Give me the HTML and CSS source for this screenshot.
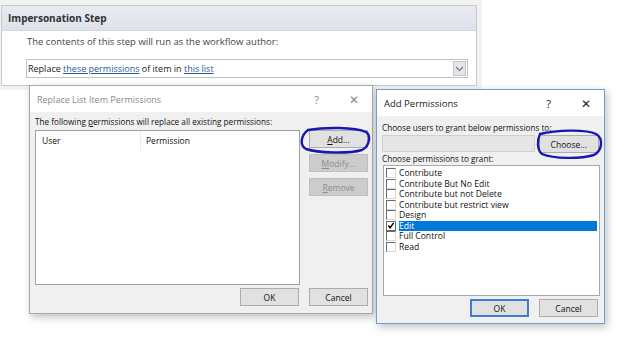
FILE: index.html
```html
<!DOCTYPE html>
<html lang="en">
<head>
    <meta charset="UTF-8">
    <title>Impersonation Step</title>
    <link rel="stylesheet" href="styles.css">
</head>
<body>
    <div class="desk">
        <section class="step">
            <div class="step-head">Impersonation Step</div>
            <div class="step-body">
                <p class="step-note">The contents of this step will run as the workflow author:</p>
                <div class="step-select">
                    <span>Replace <a href="#">these permissions</a> of item in <a href="#">this list</a></span>
                    <span class="chev">
                        <svg width="9" height="6" viewBox="0 0 9 6"><path d="M1 1 L4.5 4.5 L8 1" fill="none" stroke="#777" stroke-width="1.2"/></svg>
                    </span>
                </div>
            </div>
        </section>

        <div class="dialog dlg-replace">
            <div class="dlg-title inactive">
                <span>Replace List Item Permissions</span>
                <span class="title-tools"><span class="help">?</span><span class="close">&#x2715;</span></span>
            </div>
            <div class="dlg-body replace-body">
                <p class="label">The following <u>p</u>ermissions will replace all existing permissions:</p>
                <div class="replace-main">
                    <div class="perm-table">
                        <div class="perm-head">
                            <span class="col-user">User</span>
                            <span class="col-perm">Permission</span>
                        </div>
                    </div>
                    <div class="side-btns">
                        <button class="btn"><u>A</u>dd...</button>
                        <button class="btn" disabled><u>M</u>odify...</button>
                        <button class="btn" disabled><u>R</u>emove</button>
                    </div>
                </div>
                <div class="dlg-foot">
                    <button class="btn">OK</button>
                    <button class="btn">Cancel</button>
                </div>
            </div>
        </div>

        <div class="dialog dlg-add">
            <div class="dlg-title">
                <span>Add Permissions</span>
                <span class="title-tools"><span class="help">?</span><span class="close">&#x2715;</span></span>
            </div>
            <div class="dlg-body add-body">
                <p class="label">Choose users to grant below permissions to:</p>
                <div class="user-row">
                    <div class="user-field"></div>
                    <button class="btn">Choose...</button>
                </div>
                <p class="label">Choose permissions to grant:</p>
                <ul class="perm-list">
                    <li><span class="cb"></span>Contribute</li>
                    <li><span class="cb"></span>Contribute But No Edit</li>
                    <li><span class="cb"></span>Contribute but not Delete</li>
                    <li><span class="cb"></span>Contribute but restrict view</li>
                    <li><span class="cb"></span>Design</li>
                    <li class="selected"><span class="cb checked">
                        <svg width="9" height="9" viewBox="0 0 9 9"><path d="M1.5 4.5 L3.5 7 L7.5 1.5" fill="none" stroke="#000" stroke-width="1.6"/></svg>
                    </span><span class="sel-text">Edit</span></li>
                    <li><span class="cb"></span>Full Control</li>
                    <li><span class="cb"></span>Read</li>
                </ul>
                <div class="dlg-foot">
                    <button class="btn default">OK</button>
                    <button class="btn">Cancel</button>
                </div>
            </div>
        </div>

        <!-- hand-drawn marker circles -->
        <svg class="mark mark-add" width="72" height="28" viewBox="0 0 72 28">
            <path d="M8 4 C25 1 55 1 66 6 C71 9 70 20 62 24 C48 28 18 27 6 23 C0 20 0 10 8 4 Z" fill="none" stroke="#1818b0" stroke-width="2.4"/>
        </svg>
        <svg class="mark mark-choose" width="68" height="32" viewBox="0 0 68 32">
            <path d="M4 6 C20 2 50 1 60 6 C67 10 67 22 58 27 C44 31 18 31 6 26 C1 22 1 12 4 6 Z" fill="none" stroke="#1818b0" stroke-width="2.4"/>
        </svg>
    </div>
</body>
</html>
```

FILE: styles.css
```css
body {
    margin: 0;
    font-family: "Open Sans", "Noto Sans", sans-serif;
    background-color: #ffffff;
}

.desk {
    position: relative;
    width: 624px;
    height: 352px;
    overflow: hidden;
    background: linear-gradient(#f2f2f2, #f2f2f2) no-repeat 0 0 / 482px 90px, #ffffff;
}

/* workflow step panel */
.step {
    margin: 5px 0 0 1px;
    width: 476px;
    height: 81px;
    background-color: #ffffff;
    border: 1px solid #c9c9c9;
    box-sizing: border-box;
}

.step-head {
    height: 24px;
    line-height: 24px;
    padding-left: 6px;
    font-size: 10px;
    font-weight: bold;
    color: #333333;
    background: linear-gradient(#e8ebf0, #dde2ea);
    border-bottom: 1px solid #d3d7de;
}

.step-body {
    padding: 0 8px 0 24px;
}

.step-note {
    margin: 4px 0 0 1px;
    font-size: 9.5px;
    line-height: 14px;
    color: #444444;
}

.step-select {
    margin-top: 10px;
    height: 17px;
    display: flex;
    align-items: center;
    justify-content: space-between;
    padding-left: 1px;
    border: 1px solid #b9c3d0;
    font-size: 9px;
    color: #222222;
}

.step-select a {
    color: #2a5a9a;
}

.chev {
    width: 13px;
    height: 15px;
    margin-right: 1px;
    display: flex;
    align-items: center;
    justify-content: center;
    background-color: #e4e6ea;
    border: 1px solid #c2c6cc;
    box-sizing: border-box;
}

/* dialogs */
.dialog {
    position: absolute;
    background-color: #f0f0f0;
    box-shadow: 2px 3px 8px rgba(0, 0, 0, 0.25);
    font-size: 8.2px;
    color: #111111;
    box-sizing: border-box;
}

.dlg-replace {
    left: 29px;
    top: 85px;
    width: 344px;
    height: 229px;
    border: 1px solid #a8a8a8;
}

.dlg-add {
    left: 376px;
    top: 89px;
    width: 229px;
    height: 235px;
    border: 1px solid #6e9ed6;
}

.dlg-title {
    height: 26px;
    display: flex;
    align-items: center;
    justify-content: space-between;
    padding-left: 7px;
    background-color: #ffffff;
    font-size: 9.5px;
    color: #222222;
}

.dlg-replace .dlg-title {
    font-size: 9px;
}

.dlg-title.inactive {
    color: #8a8a8a;
}

.title-tools {
    display: flex;
    align-items: center;
    gap: 30px;
    padding-right: 13px;
    font-size: 11px;
}

.close {
    font-size: 12px;
}

.label {
    margin: 0;
    font-size: 8.2px;
    line-height: 12px;
}

.btn {
    font-family: inherit;
    font-size: 8.5px;
    color: #111111;
    background-color: #e1e1e1;
    border: 1px solid #adadad;
    padding: 0;
    height: 18px;
}

.btn:disabled {
    color: #8c8c8c;
    background-color: #cccccc;
    border-color: #bfbfbf;
}

.btn.default {
    border: 2px solid #3c7fd0;
}

/* replace dialog */
.replace-body {
    padding: 4px 4px 0 5px;
}

.replace-main {
    display: flex;
    gap: 9px;
    margin-top: 2px;
}

.perm-table {
    width: 266px;
    height: 155px;
    background-color: #ffffff;
    border: 1px solid #a0a0a0;
    box-sizing: border-box;
}

.perm-head {
    display: flex;
    height: 20px;
    line-height: 20px;
    font-size: 8.5px;
}

.col-user {
    width: 98px;
    padding-left: 6px;
    border-right: 1px solid #ececec;
}

.col-perm {
    padding-left: 5px;
}

.side-btns {
    display: flex;
    flex-direction: column;
    gap: 6px;
}

.side-btns .btn {
    width: 59px;
}

.dlg-foot {
    display: flex;
    justify-content: flex-end;
    gap: 10px;
    margin-top: 3px;
}

.dlg-foot .btn {
    width: 59px;
}

/* add dialog */
.add-body {
    padding: 6px 5px 0 5px;
}

.user-row {
    display: flex;
    gap: 4px;
    margin: 1px 0 0;
}

.user-field {
    width: 152px;
    height: 15px;
    background-color: #e6e6e6;
    border: 1px solid #d0d0d0;
}

.user-row .btn {
    width: 61px;
}

.perm-list {
    list-style: none;
    margin: 0 0 0 1px;
    padding: 2px 2px 0 2px;
    width: 217px;
    height: 131px;
    box-sizing: border-box;
    background-color: #ffffff;
    border: 1px solid #a8a8a8;
}

.perm-list li {
    display: flex;
    align-items: center;
    height: 10.5px;
    line-height: 10.5px;
    font-size: 8.6px;
}

.cb {
    width: 8px;
    height: 8px;
    margin-right: 3px;
    border: 1px solid #6a6a6a;
    border-right-color: #d8d8d8;
    border-bottom-color: #d8d8d8;
    background-color: #ffffff;
    display: flex;
    align-items: center;
    justify-content: center;
}

.cb.checked {
    border-color: #6a6a6a;
}

.perm-list li.selected .sel-text {
    flex: 1;
    color: #ffffff;
    background-color: #0078d7;
    height: 10.5px;
}

.add-body .dlg-foot {
    margin-top: 3px;
    margin-right: 1px;
}

/* marker circles */
.mark {
    position: absolute;
}

.mark-add {
    left: 300px;
    top: 126px;
}

.mark-choose {
    left: 536px;
    top: 128px;
}
```
